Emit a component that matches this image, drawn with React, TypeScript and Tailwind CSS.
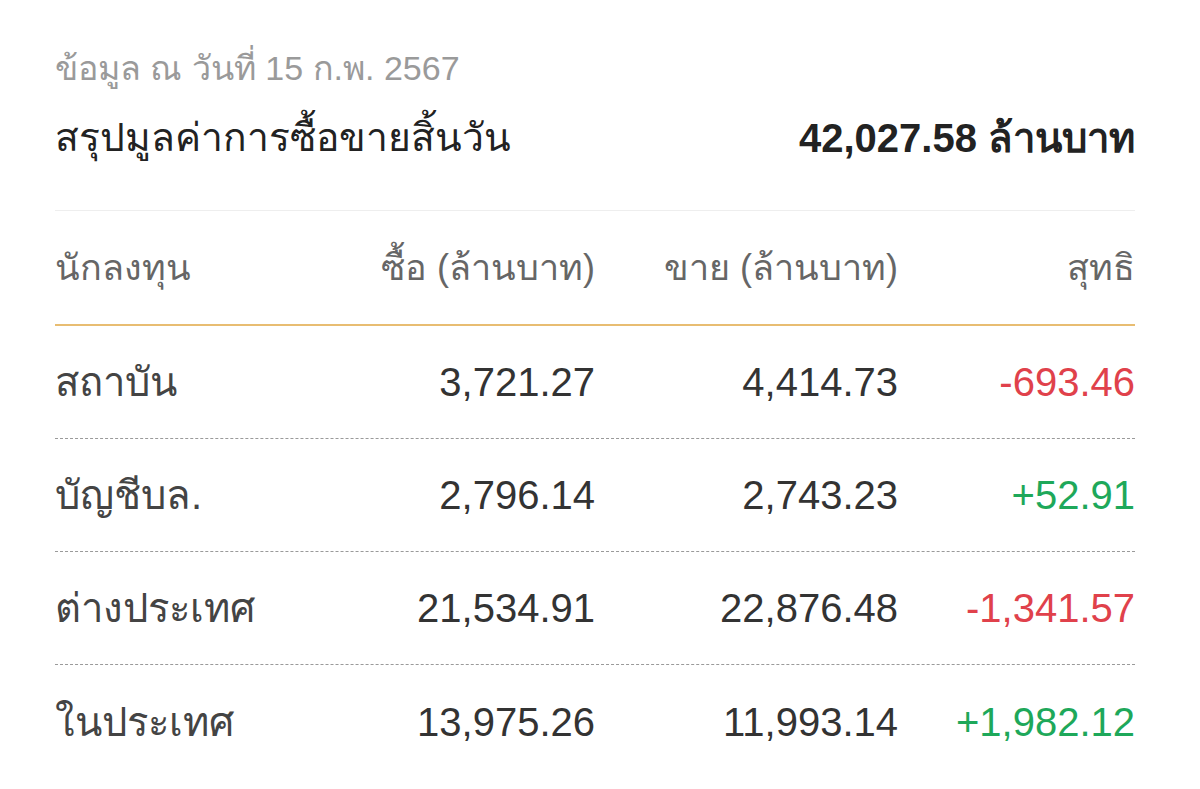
const rows = [
  { name: "สถาบัน", buy: "3,721.27", sell: "4,414.73", net: "-693.46" },
  { name: "บัญชีบล.", buy: "2,796.14", sell: "2,743.23", net: "+52.91" },
  { name: "ต่างประเทศ", buy: "21,534.91", sell: "22,876.48", net: "-1,341.57" },
  { name: "ในประเทศ", buy: "13,975.26", sell: "11,993.14", net: "+1,982.12" },
];

const font = "font-['Liberation_Sans','Noto_Sans',sans-serif]";

export default function App() {
  return (
    <div className={`min-h-screen w-full bg-white pl-[55px] pr-[65px] pt-[48px] ${font}`}>
      <div className="text-[34px] leading-[40px] text-[#9a9a9a]">ข้อมูล ณ วันที่ 15 ก.พ. 2567</div>
      <div className="mt-[26px] flex items-center justify-between pb-[48px] border-b border-[#eeeeee]">
        <div className="text-[39px] leading-[48px] font-medium text-[#222]">สรุปมูลค่าการซื้อขายสิ้นวัน</div>
        <div className="text-[40px] leading-[48px] font-bold text-[#222]">42,027.58 ล้านบาท</div>
      </div>
      <div className="grid grid-cols-[1fr_300px_303px_237px] h-[115px] items-center border-b-2 border-[#e8bd72] text-[36px] text-[#666]">
        <div>นักลงทุน</div>
        <div className="text-right">ซื้อ (ล้านบาท)</div>
        <div className="text-right">ขาย (ล้านบาท)</div>
        <div className="text-right">สุทธิ</div>
      </div>
      {rows.map((r, i) => (
        <div
          key={r.name}
          className={`grid grid-cols-[1fr_300px_303px_237px] h-[113px] items-center text-[40px] text-[#333] ${
            i < rows.length - 1 ? "border-b border-dashed border-[#9a9a9a]" : ""
          }`}
        >
          <div className="text-[#444]">{r.name}</div>
          <div className="text-right">{r.buy}</div>
          <div className="text-right">{r.sell}</div>
          <div className={`text-right ${r.net.startsWith("-") ? "text-[#e0414b]" : "text-[#1ea85a]"}`}>{r.net}</div>
        </div>
      ))}
    </div>
  );
}
